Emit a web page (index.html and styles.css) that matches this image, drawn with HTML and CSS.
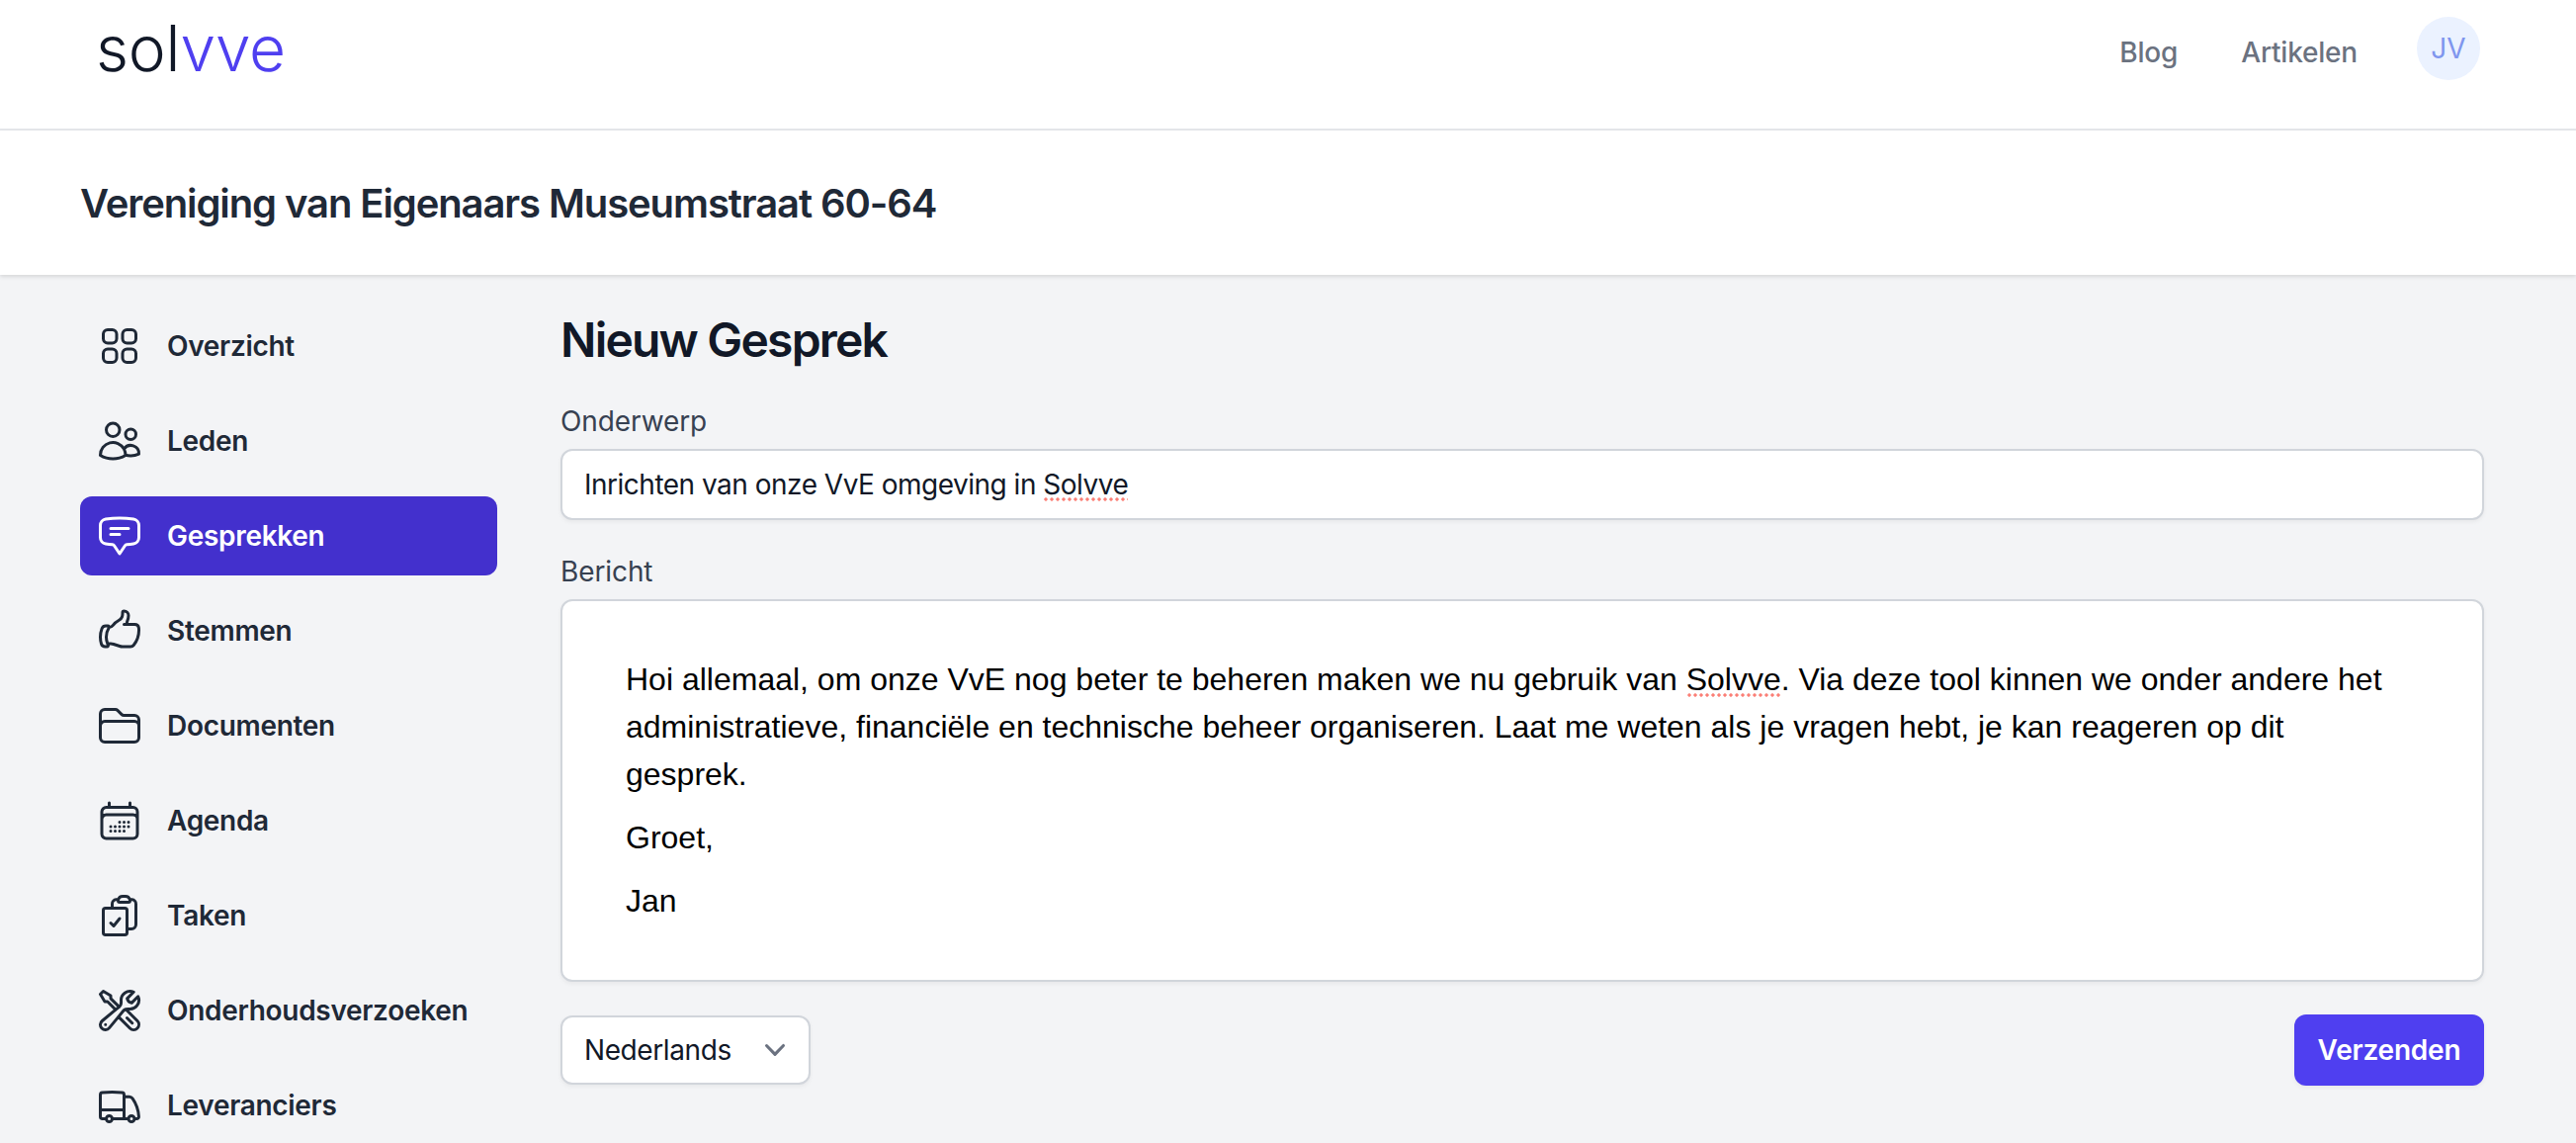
FILE: index.html
```html
<!DOCTYPE html>
<html lang="nl">
<head>
    <meta charset="UTF-8">
    <title>Nieuw Gesprek - Solvve</title>
    <link rel="stylesheet" href="styles.css">
</head>
<body>
    <header class="topbar">
        <a class="logo">sol<span class="logo-accent">vve</span></a>
        <nav class="topnav">
            <a class="topnav-link">Blog</a>
            <a class="topnav-link">Artikelen</a>
            <span class="avatar">JV</span>
        </nav>
    </header>

    <div class="titlebar">
        <h2 class="titlebar-name">Vereniging van Eigenaars Museumstraat 60-64</h2>
    </div>

    <div class="layout">
        <aside class="sidebar">
            <a class="side-item">
                <svg class="side-icon" viewBox="0 0 24 24"><path d="M3.75 6A2.25 2.25 0 0 1 6 3.75h2.25A2.25 2.25 0 0 1 10.5 6v2.25a2.25 2.25 0 0 1-2.25 2.25H6a2.25 2.25 0 0 1-2.25-2.25V6ZM3.75 15.75A2.25 2.25 0 0 1 6 13.5h2.25a2.25 2.25 0 0 1 2.25 2.25V18a2.25 2.25 0 0 1-2.25 2.25H6A2.25 2.25 0 0 1 3.75 18v-2.25ZM13.5 6a2.25 2.25 0 0 1 2.25-2.25H18A2.25 2.25 0 0 1 20.25 6v2.25A2.25 2.25 0 0 1 18 10.5h-2.25a2.25 2.25 0 0 1-2.25-2.25V6ZM13.5 15.75a2.25 2.25 0 0 1 2.25-2.25H18a2.25 2.25 0 0 1 2.25 2.25V18A2.25 2.25 0 0 1 18 20.25h-2.25A2.25 2.25 0 0 1 13.5 18v-2.25Z"/></svg>
                Overzicht
            </a>
            <a class="side-item">
                <svg class="side-icon" viewBox="0 0 24 24"><path d="M15 19.128a9.38 9.38 0 0 0 2.625.372 9.337 9.337 0 0 0 4.121-.952 4.125 4.125 0 0 0-7.533-2.493M15 19.128v-.003c0-1.113-.285-2.16-.786-3.07M15 19.128v.106A12.318 12.318 0 0 1 8.624 21c-2.331 0-4.512-.645-6.374-1.766l-.001-.109a6.375 6.375 0 0 1 11.964-3.07M12 6.375a3.375 3.375 0 1 1-6.75 0 3.375 3.375 0 0 1 6.75 0Zm8.25 2.25a2.625 2.625 0 1 1-5.25 0 2.625 2.625 0 0 1 5.25 0Z"/></svg>
                Leden
            </a>
            <a class="side-item active">
                <svg class="side-icon" viewBox="0 0 24 24"><path d="M7.5 8.25h9m-9 3H12m-9.75 1.51c0 1.6 1.123 2.994 2.707 3.227 1.129.166 2.27.293 3.423.379.35.026.67.21.865.501L12 21l2.755-4.133a1.14 1.14 0 0 1 .865-.501 48.172 48.172 0 0 0 3.423-.379c1.584-.233 2.707-1.626 2.707-3.228V6.741c0-1.602-1.123-2.995-2.707-3.228A48.394 48.394 0 0 0 12 3c-2.392 0-4.744.175-7.043.513C3.373 3.746 2.25 5.14 2.25 6.741v6.018Z"/></svg>
                Gesprekken
            </a>
            <a class="side-item">
                <svg class="side-icon" viewBox="0 0 24 24"><path d="M6.633 10.25c.806 0 1.533-.446 2.031-1.08a9.041 9.041 0 0 1 2.861-2.4c.723-.384 1.35-.956 1.653-1.715a4.498 4.498 0 0 0 .322-1.672V2.75a.75.75 0 0 1 .75-.75 2.25 2.25 0 0 1 2.25 2.25c0 1.152-.26 2.243-.723 3.218-.266.558.107 1.282.725 1.282m0 0h3.126c1.026 0 1.945.694 2.054 1.715.045.422.068.85.068 1.285a11.95 11.95 0 0 1-2.649 7.521c-.388.482-.987.729-1.605.729H13.48c-.483 0-.964-.078-1.423-.23l-3.114-1.04a4.501 4.501 0 0 0-1.423-.23H5.904m10.598-9.75H14.25M5.904 18.5c.083.205.173.405.27.602.197.4-.078.898-.523.898h-.908c-.889 0-1.713-.518-1.972-1.368a12 12 0 0 1-.521-3.507c0-1.553.295-3.036.831-4.398C3.387 9.953 4.167 9.5 5 9.5h1.053c.472 0 .745.556.5.96a8.958 8.958 0 0 0-1.302 4.665c0 1.194.232 2.333.654 3.375Z"/></svg>
                Stemmen
            </a>
            <a class="side-item">
                <svg class="side-icon" viewBox="0 0 24 24"><path d="M2.25 12.75V12A2.25 2.25 0 0 1 4.5 9.75h15A2.25 2.25 0 0 1 21.75 12v.75m-8.69-6.44-2.12-2.12a1.5 1.5 0 0 0-1.061-.44H4.5A2.25 2.25 0 0 0 2.25 6v12a2.25 2.25 0 0 0 2.25 2.25h15A2.25 2.25 0 0 0 21.75 18V9a2.25 2.25 0 0 0-2.25-2.25h-5.379a1.5 1.5 0 0 1-1.06-.44Z"/></svg>
                Documenten
            </a>
            <a class="side-item">
                <svg class="side-icon" viewBox="0 0 24 24"><path d="M6.75 3v2.25M17.25 3v2.25M3 18.75V7.5a2.25 2.25 0 0 1 2.25-2.25h13.5A2.25 2.25 0 0 1 21 7.5v11.25m-18 0A2.25 2.25 0 0 0 5.25 21h13.5A2.25 2.25 0 0 0 21 18.75m-18 0v-7.5A2.25 2.25 0 0 1 5.25 9h13.5A2.25 2.25 0 0 1 21 11.25v7.5m-9-6h.008v.008H12v-.008ZM12 15h.008v.008H12V15Zm0 2.25h.008v.008H12v-.008ZM9.75 15h.008v.008H9.75V15Zm0 2.25h.008v.008H9.75v-.008ZM7.5 15h.008v.008H7.5V15Zm0 2.25h.008v.008H7.5v-.008Zm6.75-4.5h.008v.008h-.008v-.008Zm0 2.25h.008v.008h-.008V15Zm0 2.25h.008v.008h-.008v-.008Zm2.25-4.5h.008v.008H16.5v-.008Zm0 2.25h.008v.008H16.5V15Z"/></svg>
                Agenda
            </a>
            <a class="side-item">
                <svg class="side-icon" viewBox="0 0 24 24"><path d="M11.35 3.836c-.065.21-.1.433-.1.664 0 .414.336.75.75.75h4.5a.75.75 0 0 0 .75-.75 2.25 2.25 0 0 0-.1-.664m-5.8 0A2.251 2.251 0 0 1 13.5 2.25H15c1.012 0 1.867.668 2.15 1.586m-5.8 0c-.376.023-.75.05-1.124.08C9.095 4.01 8.25 4.973 8.25 6.108V8.25m8.9-4.414c.376.023.75.05 1.124.08 1.131.094 1.976 1.057 1.976 2.192V16.5A2.25 2.25 0 0 1 18 18.75h-2.25m-7.5-10.5H4.875c-.621 0-1.125.504-1.125 1.125v11.25c0 .621.504 1.125 1.125 1.125h9.75c.621 0 1.125-.504 1.125-1.125V18.75m-7.5-10.5h6.375c.621 0 1.125.504 1.125 1.125v9.375m-8.25-3 1.5 1.5 3-3.75"/></svg>
                Taken
            </a>
            <a class="side-item">
                <svg class="side-icon" viewBox="0 0 24 24"><path d="M11.42 15.17 17.25 21A2.652 2.652 0 0 0 21 17.25l-5.877-5.877M11.42 15.17l2.496-3.03c.317-.384.74-.626 1.208-.766M11.42 15.17l-4.655 5.653a2.548 2.548 0 1 1-3.586-3.586l6.837-5.63m5.108-.233c.55-.164 1.163-.188 1.743-.14a4.5 4.5 0 0 0 4.486-6.336l-3.276 3.277a3.004 3.004 0 0 1-2.25-2.25l3.276-3.276a4.5 4.5 0 0 0-6.336 4.486c.091 1.076-.071 2.264-.904 2.95l-.102.085m-1.745 1.437L5.909 7.5H4.5L2.25 3.75l1.5-1.5L7.5 4.5v1.409l4.26 4.26m-1.745 1.437 1.745-1.437m6.615 8.206L15.75 15.75M4.867 19.125h.008v.008h-.008v-.008Z"/></svg>
                Onderhoudsverzoeken
            </a>
            <a class="side-item">
                <svg class="side-icon" viewBox="0 0 24 24"><path d="M8.25 18.75a1.5 1.5 0 0 1-3 0m3 0a1.5 1.5 0 0 0-3 0m3 0h6m-9 0H3.375a1.125 1.125 0 0 1-1.125-1.125V14.25m17.25 4.5a1.5 1.5 0 0 1-3 0m3 0a1.5 1.5 0 0 0-3 0m3 0h1.125c.621 0 1.129-.504 1.09-1.124a17.902 17.902 0 0 0-3.213-9.193 2.056 2.056 0 0 0-1.58-.86H14.25M16.5 18.75h-2.25m0-11.177v-.958c0-.568-.422-1.048-.987-1.106a48.554 48.554 0 0 0-10.026 0 1.106 1.106 0 0 0-.987 1.106v7.635m12-6.677v6.677m0 4.5v-4.5m0 0h-12"/></svg>
                Leveranciers
            </a>
        </aside>

        <main class="content">
            <h1 class="page-title">Nieuw Gesprek</h1>

            <label class="field-label">Onderwerp</label>
            <div class="text-input">Inrichten van onze VvE omgeving in <span class="spell">Solvve</span></div>

            <label class="field-label field-label-next">Bericht</label>
            <div class="editor">
                <p>Hoi allemaal, om onze VvE nog beter te beheren maken we nu gebruik van <span class="spell">Solvve</span>. Via deze tool kinnen we onder andere het administratieve, financiële en technische beheer organiseren. Laat me weten als je vragen hebt, je kan reageren op dit gesprek.</p>
                <p>Groet,</p>
                <p>Jan</p>
            </div>

            <div class="form-actions">
                <div class="lang-select">
                    Nederlands
                    <svg class="chevron" viewBox="0 0 20 20"><path d="M5.23 7.21a.75.75 0 011.06.02L10 10.94l3.71-3.71a.75.75 0 111.08 1.04l-4.25 4.5a.75.75 0 01-1.08 0l-4.25-4.5a.75.75 0 01.02-1.06z"/></svg>
                </div>
                <button type="button" class="send-btn">Verzenden</button>
            </div>
        </main>
    </div>
</body>
</html>
```
FILE: styles.css
```css
* {
    box-sizing: border-box;
}

html, body {
    height: 100%;
}

body {
    margin: 0;
    overflow: hidden;
    background-color: #f3f4f6;
    font-family: Inter, "Liberation Sans", sans-serif;
    font-size: 28px;
    line-height: 40px;
    color: #1f2937;
}

/* Top bar */
.topbar {
    height: 132px;
    padding: 0 97px;
    display: flex;
    align-items: center;
    justify-content: space-between;
    background-color: #fff;
    border-bottom: 2px solid #e5e7eb;
}

.logo {
    font-weight: 350;
    font-size: 64px;
    letter-spacing: -0.2px;
    line-height: 80px;
    color: #111827;
    margin-top: -32px;
}

.logo-accent {
    color: #4f3ff0;
}

.topnav {
    display: flex;
    align-items: center;
    margin-top: -32px;
}

.topnav-link {
    font-weight: 500;
    letter-spacing: -0.2px;
    color: #6b7280;
    margin-right: 60px;
    margin-top: 8px;
}

.topnav-link:first-child {
    margin-right: 64px;
}

.avatar {
    width: 64px;
    height: 64px;
    border-radius: 50%;
    background-color: #ebf2ff;
    color: #7f96ee;
    display: flex;
    align-items: center;
    justify-content: center;
}

/* Title bar */
.titlebar {
    height: 146px;
    padding: 2px 81px 0;
    display: flex;
    align-items: center;
    background-color: #fff;
    box-shadow: 0 2px 4px rgba(0, 0, 0, 0.12);
    position: relative;
}

.titlebar-name {
    margin: 0;
    font-size: 40px;
    font-weight: 600;
    letter-spacing: -1.1px;
    line-height: 56px;
}

/* Page layout */
.layout {
    display: flex;
    gap: 64px;
    padding: 32px 93px 0 81px;
}

.sidebar {
    width: 422px;
    flex-shrink: 0;
    display: flex;
    flex-direction: column;
    gap: 16px;
}

.side-item {
    height: 80px;
    padding: 0 16px;
    display: flex;
    align-items: center;
    gap: 24px;
    border-radius: 12px;
    font-weight: 600;
    letter-spacing: -0.3px;
    color: #1f2937;
}

.side-item.active {
    background-color: #4330cd;
    color: #fff;
}

.side-icon {
    width: 48px;
    height: 48px;
    flex-shrink: 0;
    fill: none;
    stroke: currentColor;
    stroke-width: 1.5;
    stroke-linecap: round;
    stroke-linejoin: round;
}

/* Form */
.content {
    flex: 1;
    min-width: 0;
}

.page-title {
    margin: 0 0 28px;
    font-size: 48px;
    font-weight: 600;
    letter-spacing: -1.8px;
    line-height: 68px;
    color: #111827;
}

.field-label {
    display: block;
    margin-bottom: 8px;
    letter-spacing: -0.1px;
    color: #374151;
}

.field-label-next {
    margin-top: 32px;
}

.text-input {
    height: 72px;
    padding: 14px 22px;
    background-color: #fff;
    border: 2px solid #d1d5db;
    border-radius: 12px;
    box-shadow: 0 2px 4px rgba(0, 0, 0, 0.05);
    letter-spacing: -0.5px;
    color: #111827;
}

/* spellcheck squiggle */
.spell {
    background-image: radial-gradient(circle, #fb7f76 1.4px, transparent 1.9px);
    background-repeat: repeat-x;
    background-size: 6px 4px;
    background-position: 0 100%;
}

.editor {
    height: 387px;
    padding: 55px 90px 54px 64px;
    background-color: #fff;
    border: 2px solid #d1d5db;
    border-radius: 12px;
    box-shadow: 0 2px 4px rgba(0, 0, 0, 0.05);
    font-family: "Liberation Sans", Arial, sans-serif;
    font-size: 32px;
    line-height: 48px;
    color: #000;
}

.editor p {
    margin: 0 0 16px;
}

.form-actions {
    margin-top: 33px;
    display: flex;
    align-items: center;
    justify-content: space-between;
}

.lang-select {
    width: 253px;
    height: 70px;
    padding: 0 14px 0 22px;
    display: flex;
    align-items: center;
    justify-content: space-between;
    background-color: #fff;
    border: 2px solid #d1d5db;
    border-radius: 12px;
    box-shadow: 0 2px 4px rgba(0, 0, 0, 0.05);
    letter-spacing: -0.4px;
    color: #111827;
}

.chevron {
    width: 40px;
    height: 40px;
    fill: #6b7280;
}

.send-btn {
    width: 192px;
    height: 72px;
    border: none;
    border-radius: 12px;
    background-color: #4f3ff0;
    box-shadow: 0 2px 4px rgba(0, 0, 0, 0.05);
    color: #fff;
    font-family: inherit;
    font-size: 28px;
    font-weight: 600;
    letter-spacing: -0.2px;
    cursor: pointer;
}
```
